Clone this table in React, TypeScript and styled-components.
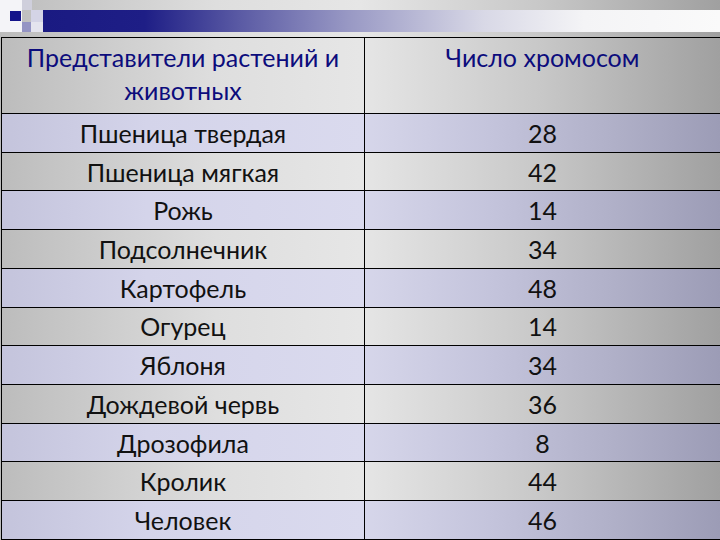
import React from "react";
import styled, { createGlobalStyle } from "styled-components";

const Global = createGlobalStyle`
  html, body { margin: 0; padding: 0; }
  body {
    width: 720px;
    height: 540px;
    overflow: hidden;
    font-family: Lato, "Open Sans", "DejaVu Sans", sans-serif;
    background: linear-gradient(90deg, #bcbcbc 0%, #dedede 30%, #e6e6e6 50%, #c8c8c8 75%, #a0a0a0 100%);
  }
`;

const Slide = styled.div`
  width: 720px;
  height: 540px;
  display: flex;
  flex-direction: column;
`;

const TopBand = styled.div`
  height: 37px;
  display: flex;
  align-items: flex-start;
  flex-shrink: 0;
`;

const Bar = styled.div`
  flex: 1;
  margin-top: 10px;
  height: 22px;
  background: linear-gradient(
    90deg,
    #1a1a82 0%,
    #1e1e86 15%,
    #5a5aa4 29%,
    #9898c4 45%,
    #d8d8e6 65%,
    #f4f4f6 80%,
    #fafafa 100%
  );
`;

const Table = styled.div`
  display: grid;
  grid-template-columns: 363px 1fr;
  border-top: 1px solid #000;
  border-left: 1px solid #000;
  margin-left: 1px;
`;

const HeadCell = styled.div<{ $first?: boolean }>`
  height: 76px;
  box-sizing: border-box;
  border-bottom: 1px solid #000;
  border-right: ${(p) => (p.$first ? "1px solid #000" : "none")};
  display: flex;
  align-items: flex-start;
  justify-content: center;
  text-align: center;
  color: #0c0c7c;
  font-size: 25px;
  line-height: 33px;
  padding-top: 3px;
`;

const Cell = styled.div<{ $first?: boolean; $tint?: boolean }>`
  height: 38.73px;
  box-sizing: border-box;
  border-bottom: 1px solid #000;
  border-right: ${(p) => (p.$first ? "1px solid #000" : "none")};
  display: flex;
  align-items: center;
  justify-content: center;
  color: #111;
  font-size: 25px;
  background: ${(p) =>
    p.$tint
      ? p.$first
        ? "linear-gradient(90deg, #c4c4dc 0%, #d4d4ea 40%, #dadaee 100%)"
        : "linear-gradient(90deg, #d6d6ea 0%, #c4c4dc 35%, #b0b0c8 70%, #9c9cb6 100%)"
      : "transparent"};
`;

const rows: [string, string][] = [
  ["Пшеница твердая", "28"],
  ["Пшеница мягкая", "42"],
  ["Рожь", "14"],
  ["Подсолнечник", "34"],
  ["Картофель", "48"],
  ["Огурец", "14"],
  ["Яблоня", "34"],
  ["Дождевой червь", "36"],
  ["Дрозофила", "8"],
  ["Кролик", "44"],
  ["Человек", "46"],
];

const Squares = () => (
  <svg width="43" height="37" viewBox="0 0 43 37">
    <rect x="0" y="0" width="22" height="32" fill="#f4f4f8" />
    <rect x="10" y="11" width="11" height="10" fill="#14148a" />
    <rect x="22" y="0" width="10" height="10" fill="#cfcfdc" />
    <rect x="31" y="10" width="12" height="12" fill="#d4d4e6" />
    <rect x="31" y="22" width="12" height="10" fill="#e4e4ee" />
    <rect x="22" y="22" width="9" height="10" fill="#9494c4" />
  </svg>
);

export default function App() {
  return (
    <>
      <Global />
      <Slide>
        <TopBand>
          <Squares />
          <Bar />
        </TopBand>
        <Table>
          <HeadCell $first>
            Представители растений и
            <br />
            животных
          </HeadCell>
          <HeadCell>Число хромосом</HeadCell>
          {rows.map(([name, n], i) => (
            <React.Fragment key={name}>
              <Cell $first $tint={i % 2 === 0}>{name}</Cell>
              <Cell $tint={i % 2 === 0}>{n}</Cell>
            </React.Fragment>
          ))}
        </Table>
      </Slide>
    </>
  );
}
